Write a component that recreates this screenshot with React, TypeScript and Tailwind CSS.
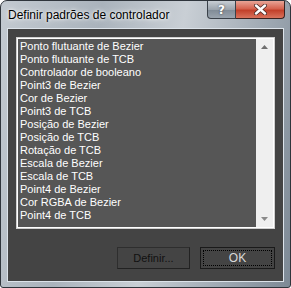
import React from "react";

const items = [
  "Ponto flutuante de Bezier",
  "Ponto flutuante de TCB",
  "Controlador de booleano",
  "Point3 de Bezier",
  "Cor de Bezier",
  "Point3 de TCB",
  "Posição de Bezier",
  "Posição de TCB",
  "Rotação de TCB",
  "Escala de Bezier",
  "Escala de TCB",
  "Point4 de Bezier",
  "Cor RGBA de Bezier",
  "Point4 de TCB",
];

export default function App() {
  return (
    <div className="w-[291px] h-[288px] rounded-t-[7px] rounded-b-[3px] border border-[#2f353c] bg-[linear-gradient(100deg,#c3cad1_0%,#aab3bc_30%,#c9cfd5_55%,#9ea8b2_80%,#7d8995_100%)] flex flex-col overflow-hidden">
      {/* title bar */}
      <div className="h-[27px] flex items-start justify-between pr-[5px]">
        <div className="pl-[7px] pt-[6px] text-[12px] leading-[16px] text-black [font-family:'Liberation_Sans',sans-serif] [text-shadow:0_0_6px_#fff,0_0_3px_#fff]">
          Definir padrões de controlador
        </div>
        <div className="flex">
          <div className="w-[29px] h-[18px] rounded-bl-[4px] border border-t-0 border-[#3a4149] bg-[linear-gradient(#c8ced4,#9ba4ad_50%,#7f8a95_51%,#9aa4ae)] flex items-center justify-center text-white text-[12px] font-bold [font-family:'DejaVu_Sans',sans-serif] [text-shadow:0_0_2px_#333]">
            ?
          </div>
          <div className="w-[49px] h-[18px] rounded-br-[4px] border border-l-0 border-t-0 border-[#3a2220] bg-[linear-gradient(#e8a597,#d5634f_45%,#c2402a_55%,#d9735c)] flex items-center justify-center">
            <svg width="13" height="11" viewBox="0 0 13 11">
              <path d="M2 1.5 L11 9.5 M11 1.5 L2 9.5" stroke="#4a2a26" strokeWidth="4" strokeLinecap="round" />
              <path d="M2 1.5 L11 9.5 M11 1.5 L2 9.5" stroke="#fff" strokeWidth="2.4" strokeLinecap="round" />
            </svg>
          </div>
        </div>
      </div>

      {/* client area */}
      <div className="mx-[6px] h-[254px] border border-[#dce3ea] bg-[#444444] flex flex-col px-[8px] pt-[8px]">
        <div className="h-[192px] border border-[#cfcfcf]">
          <div className="h-full border border-white bg-[#565656] flex">
            <div className="flex-1 pt-px pl-[2px] [font-family:'Liberation_Sans',sans-serif] text-[11px] text-white">
              {items.map((t) => (
                <div key={t} className="h-[13px] leading-[13px] whitespace-nowrap">
                  {t}
                </div>
              ))}
            </div>
            <div className="w-[17px] bg-[#efefef] flex flex-col justify-between items-center py-[6px]">
              <svg width="7" height="4" viewBox="0 0 7 4">
                <path d="M3.5 0 L7 4 L0 4 Z" fill="#6f6f6f" />
              </svg>
              <svg width="7" height="4" viewBox="0 0 7 4">
                <path d="M0 0 L7 0 L3.5 4 Z" fill="#8a8a8a" />
              </svg>
            </div>
          </div>
        </div>

        <div className="mt-[18px] flex justify-end gap-[10px] [font-family:'Liberation_Sans',sans-serif] text-[11px]">
          <div className="w-[73px] h-[22px] border border-[#222222] border-t-[#2e2e2e] border-l-[#2e2e2e] flex items-center justify-center text-[#111111]">
            Definir...
          </div>
          <div className="w-[75px] h-[22px] border border-[#1a1a1a] p-[2px]">
            <div className="h-full border border-dotted border-black flex items-center justify-center text-[#d8d8d8] text-[12px]">
              OK
            </div>
          </div>
        </div>
      </div>
    </div>
  );
}
